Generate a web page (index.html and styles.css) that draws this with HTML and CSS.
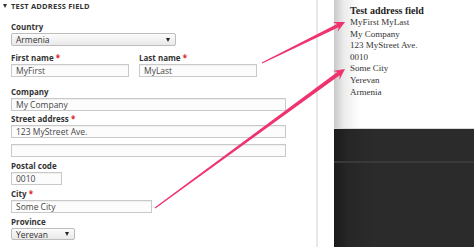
FILE: index.html
```html
<!DOCTYPE html>
<html>
<head>
<meta charset="utf-8">
<link rel="stylesheet" href="styles.css">
</head>
<body>
<div class="page">
  <section class="form-panel">
    <h2 class="fieldset-title"><span class="caret"></span>TEST ADDRESS FIELD</h2>

    <div class="field gap-lg">
      <div class="label">Country</div>
      <div class="select w-country"><span>Armenia</span><span class="arrow"></span></div>
    </div>

    <div class="row gap-md">
      <div class="field">
        <div class="label">First name <span class="req">*</span></div>
        <div class="input w-name">MyFirst</div>
      </div>
      <div class="field">
        <div class="label">Last name <span class="req">*</span></div>
        <div class="input w-name">MyLast</div>
      </div>
    </div>

    <div class="field gap-lg">
      <div class="label">Company</div>
      <div class="input w-full">My Company</div>
    </div>

    <div class="field gap-xs">
      <div class="label">Street address <span class="req">*</span></div>
      <div class="input w-full">123 MyStreet Ave.</div>
      <div class="input w-full second"></div>
    </div>

    <div class="field">
      <div class="label">Postal code</div>
      <div class="input w-postal">0010</div>
    </div>

    <div class="field">
      <div class="label">City <span class="req">*</span></div>
      <div class="input w-city">Some City</div>
    </div>

    <div class="field">
      <div class="label">Province</div>
      <div class="select w-province"><span>Yerevan</span><span class="arrow"></span></div>
    </div>
  </section>

  <section class="preview">
    <div class="preview-top">
      <div class="preview-title">Test address field</div>
      <div>MyFirst MyLast</div>
      <div>My Company</div>
      <div>123 MyStreet Ave.</div>
      <div>0010</div>
      <div>Some City</div>
      <div>Yerevan</div>
      <div>Armenia</div>
    </div>
    <div class="preview-bar"></div>
    <div class="preview-dark"></div>
  </section>

  <svg class="arrows" width="474" height="247" viewBox="0 0 474 247">
    <g transform="translate(262 63) rotate(-26.29)">
      <polygon points="0,-0.6 84.6,-1.8 81.6,-5.5 92.6,0 81.6,5.5 84.6,1.8 0,0.6"/>
    </g>
    <g transform="translate(155 208) rotate(-36.19)">
      <polygon points="0,-0.6 227.4,-2 224.4,-5.5 235.4,0 224.4,5.5 227.4,2 0,0.6"/>
    </g>
  </svg>
</div>
</body>
</html>
```

FILE: styles.css
```css
* { box-sizing: border-box; }

html, body {
  margin: 0;
  padding: 0;
  background: #ffffff;
}

.page {
  position: relative;
  width: 474px;
  height: 247px;
  overflow: hidden;
  display: flex;
}

/* ---------- form ---------- */
.form-panel {
  width: 318px;
  flex: none;
  border-right: 2px solid #e8e8e8;
  padding: 0 0 0 11px;
  font-family: "Open Sans", "DejaVu Sans", sans-serif;
  color: #333;
}

.fieldset-title {
  position: relative;
  margin: 0;
  height: 12px;
  line-height: 12px;
  font-size: 7.5px;
  font-weight: 700;
  letter-spacing: 0.2px;
  color: #333;
}

.caret {
  position: absolute;
  left: -8px;
  top: 4px;
  width: 0;
  height: 0;
  border-left: 2.5px solid transparent;
  border-right: 2.5px solid transparent;
  border-top: 4px solid #333;
}

.field {
  margin-top: 3px;
  display: flex;
  flex-direction: column;
  align-items: flex-start;
}
.gap-lg { margin-top: 9px; }
.gap-md { margin-top: 6px; }
.gap-xs { margin-top: 2px; }

.row {
  display: flex;
  gap: 10px;
}
.row .field { margin-top: 0; }

.label {
  height: 12px;
  line-height: 12px;
  font-size: 8px;
  font-weight: 700;
  color: #333;
  white-space: nowrap;
}

.req { color: #e0202a; }

.input {
  height: 13px;
  line-height: 11px;
  padding: 0 4px;
  border: 1px solid #c9c9c9;
  background: #fcfcfc;
  box-shadow: inset 0 1px 1px rgba(0,0,0,0.06);
  font-size: 8.5px;
  color: #474747;
  white-space: nowrap;
}
.input.second { margin-top: 6px; }

.select {
  height: 13px;
  display: flex;
  align-items: center;
  justify-content: space-between;
  padding: 0 5px 0 4px;
  border: 1px solid #bdbdbd;
  border-radius: 2px;
  background: linear-gradient(#fbfbfb, #e9e9e9);
  font-size: 8.5px;
  color: #333;
}
.select .arrow {
  width: 0;
  height: 0;
  border-left: 2.5px solid transparent;
  border-right: 2.5px solid transparent;
  border-top: 4px solid #222;
}

.w-country { width: 165px; }
.w-name { width: 118px; }
.w-full { width: 275px; }
.w-postal { width: 51px; }
.w-city { width: 141px; }
.w-province { width: 64px; height: 12px; }

/* ---------- preview ---------- */
.preview {
  margin-left: 16px;
  flex: 1;
  display: flex;
  flex-direction: column;
  font-family: "Liberation Serif", "Times New Roman", serif;
  color: #333;
}

.preview-top {
  height: 129px;
  flex: none;
  padding: 4px 0 0 16px;
  font-size: 9px;
  line-height: 11.6px;
  background: linear-gradient(to right, #c9c9c9 0, #ececec 10px, #ffffff 26px);
  border-bottom: 1px solid #d8d8d8;
}

.preview-title {
  font-weight: 700;
  font-size: 10px;
  color: #222;
  line-height: 13px;
}

.preview-bar {
  height: 34px;
  flex: none;
  background: linear-gradient(to right, #1b1b1b 0, #262626 14px, #2b2b2b 40px);
  border-bottom: 2px solid #393939;
}

.preview-dark {
  flex: 1;
  background: linear-gradient(to right, #1b1b1b 0, #262626 14px, #2b2b2b 40px);
}

/* ---------- annotation arrows ---------- */
.arrows {
  position: absolute;
  left: 0;
  top: 0;
  pointer-events: none;
}
.arrows polygon {
  fill: #ee336f;
}
```
